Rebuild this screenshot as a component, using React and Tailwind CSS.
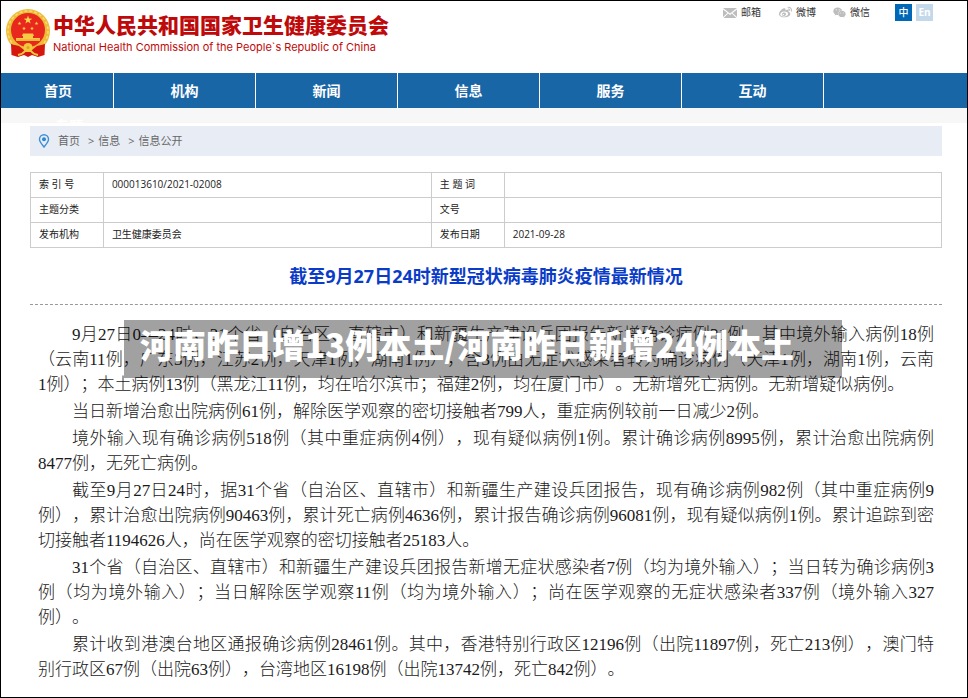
import { FaWeixin, FaWeibo } from "react-icons/fa";

const navItems = ["机构", "新闻", "信息", "服务", "互动"];

const paragraphs = [
    "9月27日0—24时，31个省（自治区、直辖市）和新疆生产建设兵团报告新增确诊病例31例。其中境外输入病例18例（云南11例，广东3例，江苏2例，天津1例，湖南1例），含3例由无症状感染者转为确诊病例（天津1例，湖南1例，云南1例）；本土病例13例（黑龙江11例，均在哈尔滨市；福建2例，均在厦门市）。无新增死亡病例。无新增疑似病例。",
    "当日新增治愈出院病例61例，解除医学观察的密切接触者799人，重症病例较前一日减少2例。",
    "境外输入现有确诊病例518例（其中重症病例4例），现有疑似病例1例。累计确诊病例8995例，累计治愈出院病例8477例，无死亡病例。",
    "截至9月27日24时，据31个省（自治区、直辖市）和新疆生产建设兵团报告，现有确诊病例982例（其中重症病例9例），累计治愈出院病例90463例，累计死亡病例4636例，累计报告确诊病例96081例，现有疑似病例1例。累计追踪到密切接触者1194626人，尚在医学观察的密切接触者25183人。",
    "31个省（自治区、直辖市）和新疆生产建设兵团报告新增无症状感染者7例（均为境外输入）；当日转为确诊病例3例（均为境外输入）；当日解除医学观察11例（均为境外输入）；尚在医学观察的无症状感染者337例（境外输入327例）。",
    "累计收到港澳台地区通报确诊病例28461例。其中，香港特别行政区12196例（出院11897例，死亡213例），澳门特别行政区67例（出院63例），台湾地区16198例（出院13742例，死亡842例）。",
];

const rows = [
    ["索 引 号", "000013610/2021-02008", "主 题 词", ""],
    ["主题分类", "", "文号", ""],
    ["发布机构", "卫生健康委员会", "发布日期", "2021-09-28"],
];

const STAR = "M0 -5 L1.2 -1.6 L4.8 -1.5 L1.9 0.6 L2.9 4 L0 2 L-2.9 4 L-1.9 0.6 L-4.8 -1.5 L-1.2 -1.6 Z";

const Emblem = () => (
    <svg viewBox="0 0 46 50" className="h-[50px] w-[46px] shrink-0" aria-hidden="true">
        <circle cx="23" cy="22" r="22" fill="#edbb35" />
        <circle cx="23" cy="22" r="20" fill="none" stroke="#f8da78" strokeWidth="1.5" strokeDasharray="3 2" />
        <circle cx="23" cy="21" r="17" fill="#e8281d" />
        <path d={STAR} transform="translate(23 11) scale(.9)" fill="#f9d34c" />
        <path d={STAR} transform="translate(14.5 14.5) scale(.4)" fill="#f9d34c" />
        <path d={STAR} transform="translate(31.5 14.5) scale(.4)" fill="#f9d34c" />
        <path d={STAR} transform="translate(19 19.5) scale(.4)" fill="#f9d34c" />
        <path d={STAR} transform="translate(27 19.5) scale(.4)" fill="#f9d34c" />
        <path d="M18 24.500 H28 L29 27 H28 V29 H35 V32 H11 V29 H18 V27 H17 Z" fill="#f7ca45" />
        <path d="M11 31 H35" stroke="#e9a82c" strokeWidth="1" />
        <path d="M6 35 L14 37 L19 41 H27 L32 37 L40 35 L39.500 46 L33 48 L27 46 L23 48 L19 46 L13 48 L6.500 46 Z" fill="#d5170f" />
        <circle cx="23" cy="38.500" r="4.500" fill="#f4c83e" />
        <circle cx="23" cy="38.500" r="1.500" fill="#dda12b" />
        <path d="M13 46 Q18 45 20 42 H26 Q28 45 33 46" fill="none" stroke="#f4c83e" strokeWidth="2" />
    </svg>
);

const MailIcon = () => (
    <svg viewBox="0 0 14 10" className="h-[10px] w-[14px]" fill="#bdbdbd" aria-hidden="true">
        <path d="M0 0 H14 L7 5.500 Z" />
        <path d="M0 1.500 L4.500 5 L0 9 Z M14 1.500 L9.500 5 L14 9 Z" />
        <path d="M5.200 5.600 L7 7 L8.800 5.600 L13.500 10 H.5 Z" />
    </svg>
);

const PinIcon = () => (
    <svg viewBox="0 0 12 14" className="h-[14px] w-3" fill="none" aria-hidden="true">
        <path d="M6 13 C4 10.500 1.500 8 1.500 5.300 A4.500 4.500 0 0 1 10.500 5.300 C10.500 8 8 10.500 6 13 Z" stroke="#3f8fd6" strokeWidth="1.400" />
        <circle cx="6" cy="5.300" r="2" fill="#2b86d6" />
    </svg>
);

const App = () => {
    return (
        <div className="min-h-screen border border-black bg-white font-['Open_Sans','Noto_Sans_CJK_SC',sans-serif] text-[#333]">
            <header className="flex h-[72px] items-start justify-between pl-1 pr-[34px]">
                <a href="#" className="flex pt-2">
                    <Emblem />
                    <span className="flex flex-col pl-0.5 pt-0.5 text-[#be0a0a]">
                        <span className="text-[21px] leading-7 font-black">中华人民共和国国家卫生健康委员会</span>
                        <span className="font-['Inter','Liberation_Sans',sans-serif] text-[11px] leading-4">
                            National Health Commission of the People`s Republic of China
                        </span>
                    </span>
                </a>
                <div className="flex items-center pt-[3px] text-[10px] leading-[17px]">
                    <a href="#" className="mr-[18px] flex items-center gap-1">
                        <MailIcon />
                        邮箱
                    </a>
                    <a href="#" className="mr-[17px] flex items-center gap-1">
                        <FaWeibo className="size-[13px] text-[#bdbdbd]" />
                        微博
                    </a>
                    <a href="#" className="mr-[25px] flex items-center gap-1">
                        <FaWeixin className="size-[13px] text-[#bdbdbd]" />
                        微信
                    </a>
                    <button className="mr-1 size-[17px] bg-[#0068b7] text-center font-medium text-white">中</button>
                    <button className="size-[17px] bg-[#c3d9ea] text-center font-bold text-white">En</button>
                </div>
            </header>

            <nav className="flex h-[35px] bg-[#1966a7] text-sm leading-[35px] font-bold text-white">
                <a href="#" className="w-[113px] border-r border-white pl-0.5 text-center">首页</a>
                {navItems.map((item) => (
                    <a key={item} href="#" className="w-[142px] border-r border-white text-center">
                        {item}
                    </a>
                ))}
            </nav>
            <div className="h-[15px] overflow-hidden bg-[#f7f7f7] pl-[54px] pt-2 text-sm leading-5 font-bold text-white">
                <a href="#">专题</a>
            </div>

            <main className="mx-[29px] mr-[25px] pt-[3px]">
                <div className="flex h-[30px] items-center bg-[#e8edf5] pl-2 text-[11px] text-[#666]">
                    <PinIcon />
                    <a href="#" className="ml-2">首页</a>
                    <span className="mr-1 ml-2">&gt;</span>
                    <a href="#">信息</a>
                    <span className="mr-1 ml-2">&gt;</span>
                    <a href="#">信息公开</a>
                </div>

                <table className="mt-4 w-full table-fixed border-collapse text-[10px] leading-4 text-[#222]">
                    <colgroup>
                        <col className="w-[8%]" />
                        <col className="w-[36%]" />
                        <col className="w-[8%]" />
                        <col className="w-[48%]" />
                    </colgroup>
                    <tbody>
                        {rows.map((row) => (
                            <tr key={row[0]} className="h-[25px]">
                                {row.map((cell, i) => (
                                    <td key={i} className="border border-[#ccc] px-2 pb-0.5">
                                        {cell}
                                    </td>
                                ))}
                            </tr>
                        ))}
                    </tbody>
                </table>

                <h1 className="border-b border-dashed border-[#999] pt-[14px] pb-[14px] text-center text-[18px] leading-7 font-bold text-[#0a3cc8]">
                    截至9月27日24时新型冠状病毒肺炎疫情最新情况
                </h1>

                <article className="relative flex flex-col gap-0.5 px-2 pt-[17px] font-['Liberation_Serif','Noto_Sans_CJK_SC',serif] text-[17px] leading-[25px] font-light text-[#1a1a1a] [text-spacing-trim:space-all]">
                    {paragraphs.map((text) => (
                        <p key={text} className="indent-[2em] text-justify">
                            {text}
                        </p>
                    ))}
                    <div className="absolute top-[15px] left-[94px] h-[58px] w-[718px] bg-black/37 pl-4 font-['Noto_Sans_CJK_SC',sans-serif] text-[33px] leading-[48px] font-black whitespace-nowrap text-white">
                        河南昨日增13例本土/河南昨日新增24例本土
                    </div>
                </article>
            </main>
        </div>
    );
};

export default App;
